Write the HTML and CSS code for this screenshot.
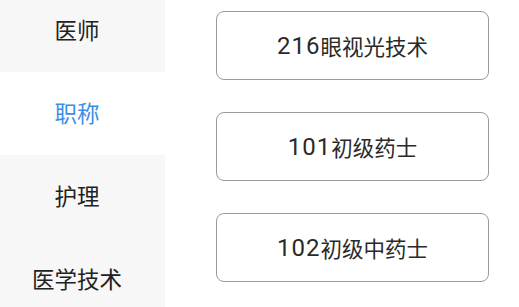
FILE: index.html
```html
<!DOCTYPE html>
<html lang="zh-CN">
<head>
<meta charset="utf-8">
<title>职称</title>
<link rel="stylesheet" href="styles.css">
</head>
<body>
<div class="page">
  <nav class="sidebar">
    <div class="menu">
      <div class="menu-item">医师</div>
      <div class="menu-item active">职称</div>
      <div class="menu-item">护理</div>
      <div class="menu-item">医学技术</div>
    </div>
  </nav>
  <main class="content">
    <div class="option"><span class="code">216</span>眼视光技术</div>
    <div class="option"><span class="code">101</span>初级药士</div>
    <div class="option"><span class="code">102</span>初级中药士</div>
  </main>
</div>
</body>
</html>
```
FILE: styles.css
```css
html, body {
  margin: 0;
  padding: 0;
  background: #ffffff;
}
body {
  font-family: Roboto, "Noto Sans CJK SC", sans-serif;
  width: 519px;
  height: 307px;
  overflow: hidden;
}
.page {
  display: flex;
  height: 307px;
}
.sidebar {
  width: 165px;
  flex: none;
  background: #f7f7f7;
  overflow: hidden;
}
.menu {
  display: flex;
  flex-direction: column;
  margin-top: -11px;
}
.menu-item {
  height: 83px;
  box-sizing: border-box;
  display: flex;
  align-items: center;
  justify-content: center;
  padding: 0 11px 4px 0;
  font-size: 22.5px;
  color: #222222;
}
.menu-item.active {
  background: #ffffff;
  color: #3a8ee6;
}
.content {
  flex: 1;
  display: flex;
  flex-direction: column;
  gap: 32px;
  padding: 11px 30px 0 51px;
}
.option {
  height: 67px;
  border: 1.5px solid #9a9a9a;
  border-radius: 8px;
  display: flex;
  align-items: center;
  justify-content: center;
  font-size: 21.5px;
  color: #2a2a2a;
}
.code {
  font-size: 24px;
  letter-spacing: 1px;
}
```
